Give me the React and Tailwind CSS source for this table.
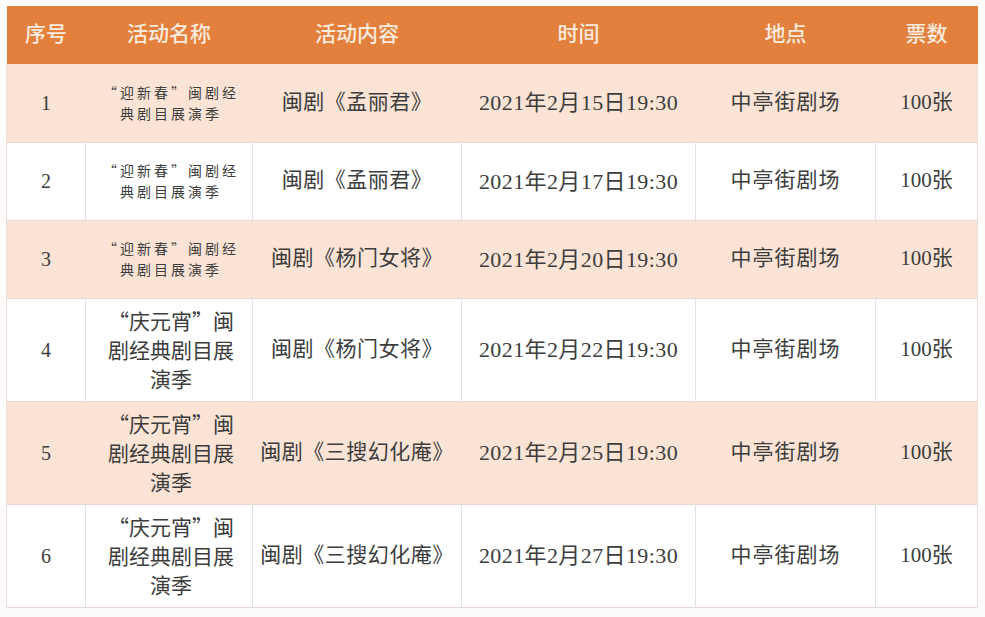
import React from "react";

// columns of the schedule table
const headers = ["序号", "活动名称", "活动内容", "时间", "地点", "票数"];
const widths = ["w-[79px]", "w-[167px]", "w-[209px]", "w-[234px]", "w-[180px]", "w-[102px]"];

const spring = ["“迎新春”闽剧经", "典剧目展演季"];
const lantern = ["“庆元宵”闽", "剧经典剧目展", "演季"];

const rows = [
  { no: 1, name: spring, small: true, show: "闽剧《孟丽君》", time: "2021年2月15日19:30" },
  { no: 2, name: spring, small: true, show: "闽剧《孟丽君》", time: "2021年2月17日19:30" },
  { no: 3, name: spring, small: true, show: "闽剧《杨门女将》", time: "2021年2月20日19:30" },
  { no: 4, name: lantern, show: "闽剧《杨门女将》", time: "2021年2月22日19:30" },
  { no: 5, name: lantern, show: "闽剧《三搜幻化庵》", time: "2021年2月25日19:30" },
  { no: 6, name: lantern, show: "闽剧《三搜幻化庵》", time: "2021年2月27日19:30" },
];

const font = { fontFamily: '"Liberation Serif", "Noto Sans CJK SC", serif' };
// CJK first so the quote marks come out full width
const cjk = { fontFamily: '"Noto Sans CJK SC", sans-serif' };

export default function App() {
  return (
    <div className="w-[985px] h-[617px] bg-[#fefcfa] pt-[6px] pl-[6px]" style={font}>
      <table className="w-[971px] border-collapse table-fixed">
        <thead>
          <tr className="h-[58px] bg-[#e3803d]">
            {headers.map((h, i) => (
              <th
                key={h}
                className={`${widths[i]} p-0 text-[21px] font-medium text-[#fcebdd] text-center align-middle`}
              >
                {h}
              </th>
            ))}
          </tr>
        </thead>
        <tbody className="text-[#3d3d3d]">
          {rows.map((r) => {
            const peach = r.no % 2 === 1;
            const cell = peach
              ? "border-l border-[#fbe4d6]"
              : "border-l border-[#dfe3e8]";
            return (
              <tr
                key={r.no}
                className={`${r.small ? "h-[78px]" : "h-[103px]"} ${
                  peach ? "bg-[#fbe4d6]" : "bg-white"
                } border-b border-[#ead9d2] text-center align-middle`}
              >
                <td className="border-l border-[#e6e1de] text-[20px]">{r.no}</td>
                <td className={cell} style={cjk}>
                  {r.small ? (
                    <div className="text-[14px] leading-[21px] tracking-[3px] pl-[4px]">
                      {r.name.map((l) => (
                        <div key={l}>{l}</div>
                      ))}
                    </div>
                  ) : (
                    <div className="text-[21px] leading-[29px] pl-[4px]">
                      {r.name.map((l) => (
                        <div key={l}>{l}</div>
                      ))}
                    </div>
                  )}
                </td>
                <td className={`${cell} text-[21px] tracking-[0.5px] whitespace-nowrap`}>{r.show}</td>
                <td className={`${cell} text-[22px] tracking-[0.4px] whitespace-nowrap`}>{r.time}</td>
                <td className={`${cell} text-[21px] tracking-[1px]`}>中亭街剧场</td>
                <td className={`${cell} border-r border-r-[#e6e1de] text-[21px]`}>100张</td>
              </tr>
            );
          })}
        </tbody>
      </table>
    </div>
  );
}
